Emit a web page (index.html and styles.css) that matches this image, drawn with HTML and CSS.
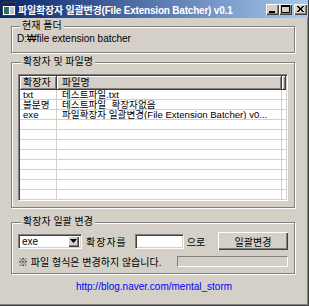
FILE: index.html
```html
<!DOCTYPE html>
<html lang="ko">

<head>
    <meta charset="UTF-8">
    <meta name="viewport" content="width=device-width, initial-scale=1.0">
    <title>File Extension Batcher</title>
    <link rel="stylesheet" href="styles.css">
</head>

<body>

    <div class="window">
        <div class="titlebar">
            <svg class="app-icon" width="14" height="14" viewBox="0 0 14 14">
                <rect x="0.5" y="0.5" width="13" height="13" fill="#fff" stroke="#3a3a3a"/>
                <rect x="1" y="1" width="12" height="3" fill="#0a246a"/>
                <rect x="2" y="5" width="5" height="7" fill="#1f6f7a"/>
                <rect x="8" y="5" width="4" height="7" fill="#c0c0c0"/>
            </svg>
            <span class="title">파일확장자 일괄변경(File Extension Batcher) v0.1</span>
            <div class="caption-buttons">
                <span class="cap-btn">
                    <svg width="13" height="11" viewBox="0 0 13 11"><rect x="3" y="7" width="6" height="2" fill="#000"/></svg>
                </span>
                <span class="cap-btn">
                    <svg width="13" height="11" viewBox="0 0 13 11"><path d="M2.5 1.5h8v7h-8z" fill="none" stroke="#000"/><rect x="2" y="1" width="9" height="2" fill="#000"/></svg>
                </span>
                <span class="cap-btn cap-close">
                    <svg width="13" height="11" viewBox="0 0 13 11"><path d="M3 2l6 6M4 2l6 6M9 2l-6 6M10 2l-6 6" stroke="#000" stroke-width="1"/></svg>
                </span>
            </div>
        </div>

        <div class="client">
            <!-- 현재 폴더 -->
            <fieldset class="group group-folder">
                <legend>현재 폴더</legend>
                <div class="folder-path">D:₩file extension batcher</div>
            </fieldset>

            <!-- 파일 목록 -->
            <fieldset class="group group-list">
                <legend>확장자 및 파일명</legend>
                <div class="listview">
                    <div class="lv-row lv-header">
                        <div class="lv-head">확장자</div>
                        <div class="lv-head">파일명</div>
                        <div class="lv-head lv-filler"></div>
                    </div>
                    <div class="lv-row"><div class="lv-cell">txt</div><div class="lv-cell">테스트파일.txt</div><div class="lv-cell"></div></div>
                    <div class="lv-row"><div class="lv-cell">불분명</div><div class="lv-cell">테스트파일_확장자없음</div><div class="lv-cell"></div></div>
                    <div class="lv-row"><div class="lv-cell">exe</div><div class="lv-cell">파일확장자 일괄변경(File Extension Batcher) v0...</div><div class="lv-cell"></div></div>
                    <div class="lv-row"><div class="lv-cell"></div><div class="lv-cell"></div><div class="lv-cell"></div></div>
                    <div class="lv-row"><div class="lv-cell"></div><div class="lv-cell"></div><div class="lv-cell"></div></div>
                    <div class="lv-row"><div class="lv-cell"></div><div class="lv-cell"></div><div class="lv-cell"></div></div>
                    <div class="lv-row"><div class="lv-cell"></div><div class="lv-cell"></div><div class="lv-cell"></div></div>
                    <div class="lv-row"><div class="lv-cell"></div><div class="lv-cell"></div><div class="lv-cell"></div></div>
                    <div class="lv-row"><div class="lv-cell"></div><div class="lv-cell"></div><div class="lv-cell"></div></div>
                    <div class="lv-row"><div class="lv-cell"></div><div class="lv-cell"></div><div class="lv-cell"></div></div>
                    <div class="lv-row"><div class="lv-cell"></div><div class="lv-cell"></div><div class="lv-cell"></div></div>
                </div>
            </fieldset>

            <!-- 일괄 변경 -->
            <fieldset class="group group-change">
                <legend>확장자 일괄 변경</legend>
                <div class="change-row">
                    <div class="combo">
                        <span class="combo-text">exe</span>
                        <span class="combo-btn">
                            <svg width="7" height="4" viewBox="0 0 7 4"><path d="M0 0h7L3.5 4z" fill="#000"/></svg>
                        </span>
                    </div>
                    <span class="label-ext">확장자를</span>
                    <div class="text-input"></div>
                    <span class="label-to">으로</span>
                    <button type="button" class="btn-change">일괄변경</button>
                </div>
                <div class="note-row">
                    <span class="note">※ 파일 형식은 변경하지 않습니다.</span>
                    <div class="progress"></div>
                </div>
            </fieldset>

            <a class="blog-link" href="#">http://blog.naver.com/mental_storm</a>
        </div>
    </div>

</body>

</html>
```

FILE: styles.css
```css
body {
    margin: 0;
    padding: 0;
    background: #d4d0c8;
    font-family: "Liberation Sans", "Noto Sans CJK KR", sans-serif;
    font-size: 10px;
    color: #000;
}

/* Window frame */
.window {
    width: 309px;
    height: 306px;
    box-sizing: border-box;
    border-right: 1px solid #404040;
    border-bottom: 1px solid #404040;
    box-shadow: inset -1px -1px 0 #808080;
}

.titlebar {
    height: 18px;
    display: flex;
    align-items: center;
    padding: 0 1px 0 2px;
    background: linear-gradient(to right, #0a246a, #a6caf0);
    color: #fff;
}

.app-icon {
    flex: none;
}

.title {
    margin-left: 2px;
    font-weight: bold;
    font-size: 10px;
    letter-spacing: -0.2px;
    white-space: nowrap;
}

.caption-buttons {
    margin-left: auto;
    display: flex;
}

.cap-btn {
    width: 13px;
    height: 11px;
    background: #d4d0c8;
    box-shadow: inset 1px 1px 0 #fff, inset -1px -1px 0 #404040, inset -2px -2px 0 #808080;
    display: flex;
}

.cap-close {
    margin-left: 2px;
}

/* Group boxes */
.group {
    margin: 0 0 0 11px;
    width: 284px;
    min-width: 0;
    box-sizing: border-box;
    border: 1px solid #808080;
    box-shadow: inset 1px 1px 0 #fff, 1px 1px 0 #fff;
}

.group legend {
    padding: 0 2px;
    margin-left: 3px;
    line-height: 12px;
    background: #d4d0c8;
}

.group-folder {
    margin-top: 2px;
    padding: 0 5px 6px;
}

.folder-path {
    line-height: 14px;
}

.group-list {
    margin-top: 3px;
    padding: 6px 6px 6px;
}

/* List view */
.listview {
    height: 127px;
    box-sizing: border-box;
    border: 1px solid;
    border-color: #808080 #fff #fff #808080;
    box-shadow: inset 1px 1px 0 #404040, inset -1px -1px 0 #d4d0c8;
    background: #fff;
    padding: 1px;
    overflow: hidden;
}

.lv-row {
    display: grid;
    grid-template-columns: 37px 225px 1fr;
    height: 10px;
}

.lv-header {
    height: 14px;
}

.lv-head {
    box-sizing: border-box;
    padding-left: 3px;
    line-height: 13px;
    background: #d4d0c8;
    border-right: 1px solid #404040;
    border-bottom: 1px solid #404040;
    box-shadow: inset 1px 1px 0 #fff, inset -1px -1px 0 #808080;
}

.lv-head:nth-child(2) {
    padding-left: 5px;
}

.lv-cell {
    box-sizing: border-box;
    padding-left: 3px;
    font-size: 9.6px;
    line-height: 10px;
    white-space: nowrap;
    overflow: hidden;
    border-bottom: 1px solid #d4d0c8;
    border-right: 1px solid #d4d0c8;
}

.lv-cell:nth-child(2) {
    padding-left: 5px;
}

.lv-cell:last-child {
    border-right: none;
}

/* Batch change */
.group-change {
    margin-top: 8px;
    padding: 4px 6px 6px;
}

.change-row {
    display: flex;
    align-items: center;
    height: 18px;
}

.combo {
    width: 64px;
    height: 15px;
    box-sizing: border-box;
    display: flex;
    align-items: center;
    background: #fff;
    border: 1px solid;
    border-color: #808080 #fff #fff #808080;
    box-shadow: inset 1px 1px 0 #404040, inset -1px -1px 0 #d4d0c8;
    padding: 2px;
}

.combo-text {
    flex: 1;
    padding-left: 1px;
    line-height: 11px;
}

.combo-btn {
    width: 11px;
    height: 11px;
    box-sizing: border-box;
    display: flex;
    align-items: center;
    justify-content: center;
    background: #d4d0c8;
    box-shadow: inset 1px 1px 0 #fff, inset -1px -1px 0 #404040, inset -2px -2px 0 #808080;
}

.label-ext {
    margin-left: 4px;
    letter-spacing: 1px;
}

.text-input {
    width: 49px;
    height: 15px;
    margin-left: 8px;
    box-sizing: border-box;
    background: #fff;
    border: 1px solid;
    border-color: #808080 #fff #fff #808080;
    box-shadow: inset 1px 1px 0 #404040, inset -1px -1px 0 #d4d0c8;
}

.label-to {
    margin-left: 3px;
}

.btn-change {
    margin-left: auto;
    width: 70px;
    height: 18px;
    padding: 0;
    border: none;
    background: #d4d0c8;
    font-family: inherit;
    font-size: 10px;
    color: #000;
    box-shadow: inset 1px 1px 0 #fff, inset -1px -1px 0 #404040, inset -2px -2px 0 #808080;
}

.note-row {
    display: flex;
    align-items: center;
    margin-top: 6px;
    height: 11px;
}

.note {
    white-space: nowrap;
}

.progress {
    margin-left: auto;
    width: 111px;
    height: 11px;
    box-sizing: border-box;
    border: 1px solid;
    border-color: #808080 #fff #fff #808080;
}

.blog-link {
    display: block;
    margin-top: 7px;
    line-height: 12px;
    text-align: center;
    color: #0000ff;
    text-decoration: none;
}
```
